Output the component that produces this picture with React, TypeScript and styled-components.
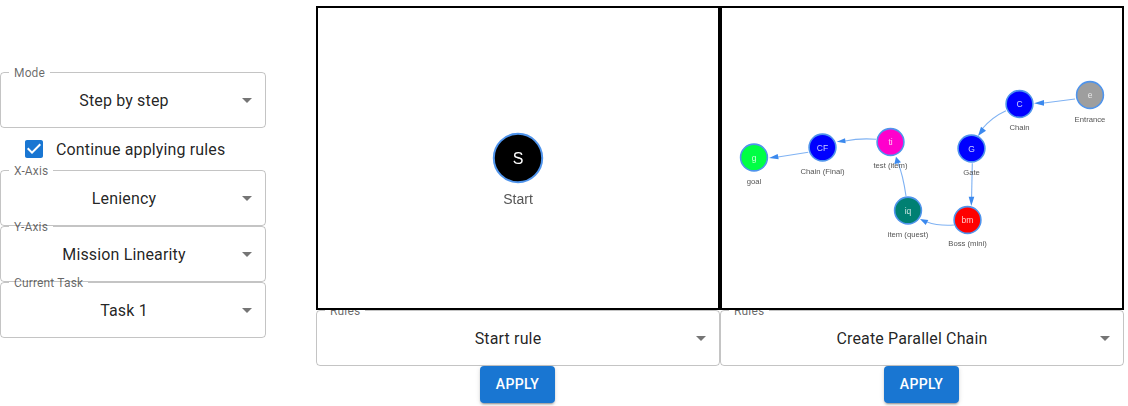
import React from 'react';
import styled, { createGlobalStyle } from 'styled-components';

const GlobalStyle = createGlobalStyle`
    html, body {
        margin: 0;
        padding: 0;
        background: #fff;
        font-family: Roboto, "Liberation Sans", Arial, sans-serif;
    }
`;

const Page = styled.div`
    display: flex;
    align-items: flex-start;
    width: 1128px;
    height: 406px;
    overflow: hidden;
`;

const Sidebar = styled.div`
    width: 266px;
    margin-right: 50px;
    padding-top: 72px;
    flex: none;
`;

const Workspace = styled.div`
    display: grid;
    grid-template-columns: 404px 404px;
    padding-top: 6px;
`;

const Canvas = styled.div`
    position: relative;
    z-index: 2;
    box-sizing: border-box;
    width: 404px;
    height: 304px;
    border: 2px solid #000;
    background: #fff;
`;

const GraphSvg = styled.svg`
    display: block;
    width: 400px;
    height: 300px;
    filter: blur(0.25px);
`;

const Field = styled.div`
    position: relative;
    box-sizing: border-box;
    width: 100%;
    height: 56px;
    padding: 0 32px 0 14px;
    display: flex;
    align-items: center;
    justify-content: center;
    font-size: 16px;
    letter-spacing: 0.15px;
    color: rgba(0, 0, 0, 0.87);
`;

const Column = styled.div`
    display: flex;
    flex-direction: column;
    align-items: center;

    ${Field} {
        padding-right: 34px;
    }
`;

const FieldLabel = styled.label`
    position: absolute;
    z-index: 1;
    left: 14px;
    top: -7px;
    font-size: 12px;
    line-height: 17px;
    letter-spacing: 0.15px;
    color: rgba(0, 0, 0, 0.6);
    white-space: nowrap;
`;

const Outline = styled.fieldset`
    position: absolute;
    top: -5px;
    left: 0;
    right: 0;
    bottom: 0;
    margin: 0;
    padding: 0 8px;
    border: 1px solid rgba(0, 0, 0, 0.23);
    border-radius: 4px;
    pointer-events: none;
    text-align: left;

    legend {
        display: block;
        height: 11px;
        padding: 0;
        font-size: 12px;
        letter-spacing: 0.15px;
        visibility: hidden;
        white-space: nowrap;

        span {
            padding: 0 5px;
            display: inline-block;
        }
    }
`;

const Arrow = styled.svg`
    position: absolute;
    right: 7px;
    top: 16px;
    width: 24px;
    height: 24px;
    fill: rgba(0, 0, 0, 0.54);
`;

const CheckRow = styled.label`
    display: flex;
    align-items: center;
    height: 42px;
    padding-left: 22px;
    gap: 10px;
    font-size: 16px;
    letter-spacing: 0.13px;
    color: rgba(0, 0, 0, 0.87);
`;

const CheckIcon = styled.svg`
    width: 24px;
    height: 24px;
    fill: #1976d2;
`;

const ApplyButton = styled.button`
    box-sizing: border-box;
    width: 75px;
    height: 37px;
    margin-right: 1px;
    padding: 0 0 2px;
    border: 0;
    border-radius: 4px;
    background: #1976d2;
    color: #fff;
    font-family: inherit;
    font-size: 14px;
    font-weight: 500;
    letter-spacing: 0.4px;
    text-transform: uppercase;
    box-shadow: 0 3px 1px -2px rgba(0, 0, 0, 0.2), 0 2px 2px 0 rgba(0, 0, 0, 0.14),
        0 1px 5px 0 rgba(0, 0, 0, 0.12);
`;

const NodeText = styled.text`
    font-family: "Liberation Sans", Arial, sans-serif;
    text-anchor: middle;
`;

type Node = {
    id: string;
    x: number;
    y: number;
    color: string;
    name: string;
    nameY: number;
};

// coordinates are relative to the inner area of the right hand canvas
const nodes: Node[] = [
    { id: 'e', x: 368, y: 87, color: '#9e9e9e', name: 'Entrance', nameY: 114 },
    { id: 'C', x: 297.5, y: 96, color: '#0000ff', name: 'Chain', nameY: 122 },
    { id: 'G', x: 249.5, y: 140.5, color: '#0000ff', name: 'Gate', nameY: 167 },
    { id: 'bm', x: 245.5, y: 212, color: '#ff0000', name: 'Boss (mini)', nameY: 238 },
    { id: 'iq', x: 186, y: 202.5, color: '#008072', name: 'item (quest)', nameY: 229 },
    { id: 'ti', x: 168.5, y: 134, color: '#ff00cc', name: 'test (item)', nameY: 160 },
    { id: 'CF', x: 100.5, y: 139.5, color: '#0000ff', name: 'Chain (Final)', nameY: 166 },
    { id: 'g', x: 32, y: 149.5, color: '#00ff44', name: 'goal', nameY: 176 }
];

const edges = [
    { d: 'M353 91 L322 95', head: '312,95.3 322,92 322,97.7' },
    { d: 'M284 102.7 Q270 109 260 121', head: '256,128 264,122.7 259,118.7' },
    { d: 'M250.3 155.3 L249.6 189', head: '249.3,198 246.7,188.7 252.3,188.7' },
    { d: 'M232 217 Q216 218 205 214', head: '198,211 206.3,212 203.7,217' },
    { d: 'M184 188 Q181 167 176 155', head: '174,148.7 172.3,156.3 179,154.3' },
    { d: 'M154 131.3 Q138 130 123 133', head: '114.7,133.7 123,130.3 123.7,135.3' },
    { d: 'M86.3 144.3 L56 149', head: '47,150 55.7,146 56.7,151.3' }
];

const Graph = () => (
    <GraphSvg viewBox="0 0 400 300">
        {edges.map((edge, i) => (
            <g key={i}>
                <path d={edge.d} fill="none" stroke="#7fb2f3" strokeWidth="1.1" />
                <polygon points={edge.head} fill="#3b89ee" />
            </g>
        ))}
        {nodes.map(node => (
            <g key={node.id}>
                <circle cx={node.x} cy={node.y} r="13.4" fill={node.color} stroke="#4f94ec" strokeWidth="1.6" />
                <NodeText x={node.x} y={node.y + 3} fontSize="8.5" fill="rgba(255,255,255,0.8)">
                    {node.id}
                </NodeText>
                <NodeText x={node.x} y={node.nameY} fontSize="7.7" fill="#555">
                    {node.name}
                </NodeText>
            </g>
        ))}
    </GraphSvg>
);

const StartGraph = () => (
    <GraphSvg viewBox="0 0 400 300">
        <circle cx="200" cy="150" r="24.2" fill="#000" stroke="#4f94ec" strokeWidth="2" />
        <NodeText x="200" y="155.5" fontSize="16" fill="#fff">
            S
        </NodeText>
        <NodeText x="200" y="196" fontSize="14" fill="#555">
            Start
        </NodeText>
    </GraphSvg>
);

const Select = ({ label, value }: { label: string; value: string }) => (
    <Field>
        <FieldLabel>{label}</FieldLabel>
        {value}
        <Arrow viewBox="0 0 24 24">
            <path d="M7 10l5 5 5-5z" />
        </Arrow>
        <Outline>
            <legend>
                <span>{label}</span>
            </legend>
        </Outline>
    </Field>
);

export default function App() {
    return (
        <>
            <GlobalStyle />
            <Page>
                <Sidebar>
                    <Select label="Mode" value="Step by step" />
                    <CheckRow>
                        <CheckIcon viewBox="0 0 24 24">
                            <path d="M19 3H5c-1.11 0-2 .9-2 2v14c0 1.1.89 2 2 2h14c1.11 0 2-.9 2-2V5c0-1.1-.89-2-2-2zm-9 14l-5-5 1.41-1.41L10 14.17l7.59-7.59L19 8l-9 9z" />
                        </CheckIcon>
                        Continue applying rules
                    </CheckRow>
                    <Select label="X-Axis" value="Leniency" />
                    <Select label="Y-Axis" value="Mission Linearity" />
                    <Select label="Current Task" value="Task 1" />
                </Sidebar>
                <Workspace>
                    <Column>
                        <Canvas>
                            <StartGraph />
                        </Canvas>
                        <Select label="Rules" value="Start rule" />
                        <ApplyButton>Apply</ApplyButton>
                    </Column>
                    <Column>
                        <Canvas>
                            <Graph />
                        </Canvas>
                        <Select label="Rules" value="Create Parallel Chain" />
                        <ApplyButton>Apply</ApplyButton>
                    </Column>
                </Workspace>
            </Page>
        </>
    );
}
